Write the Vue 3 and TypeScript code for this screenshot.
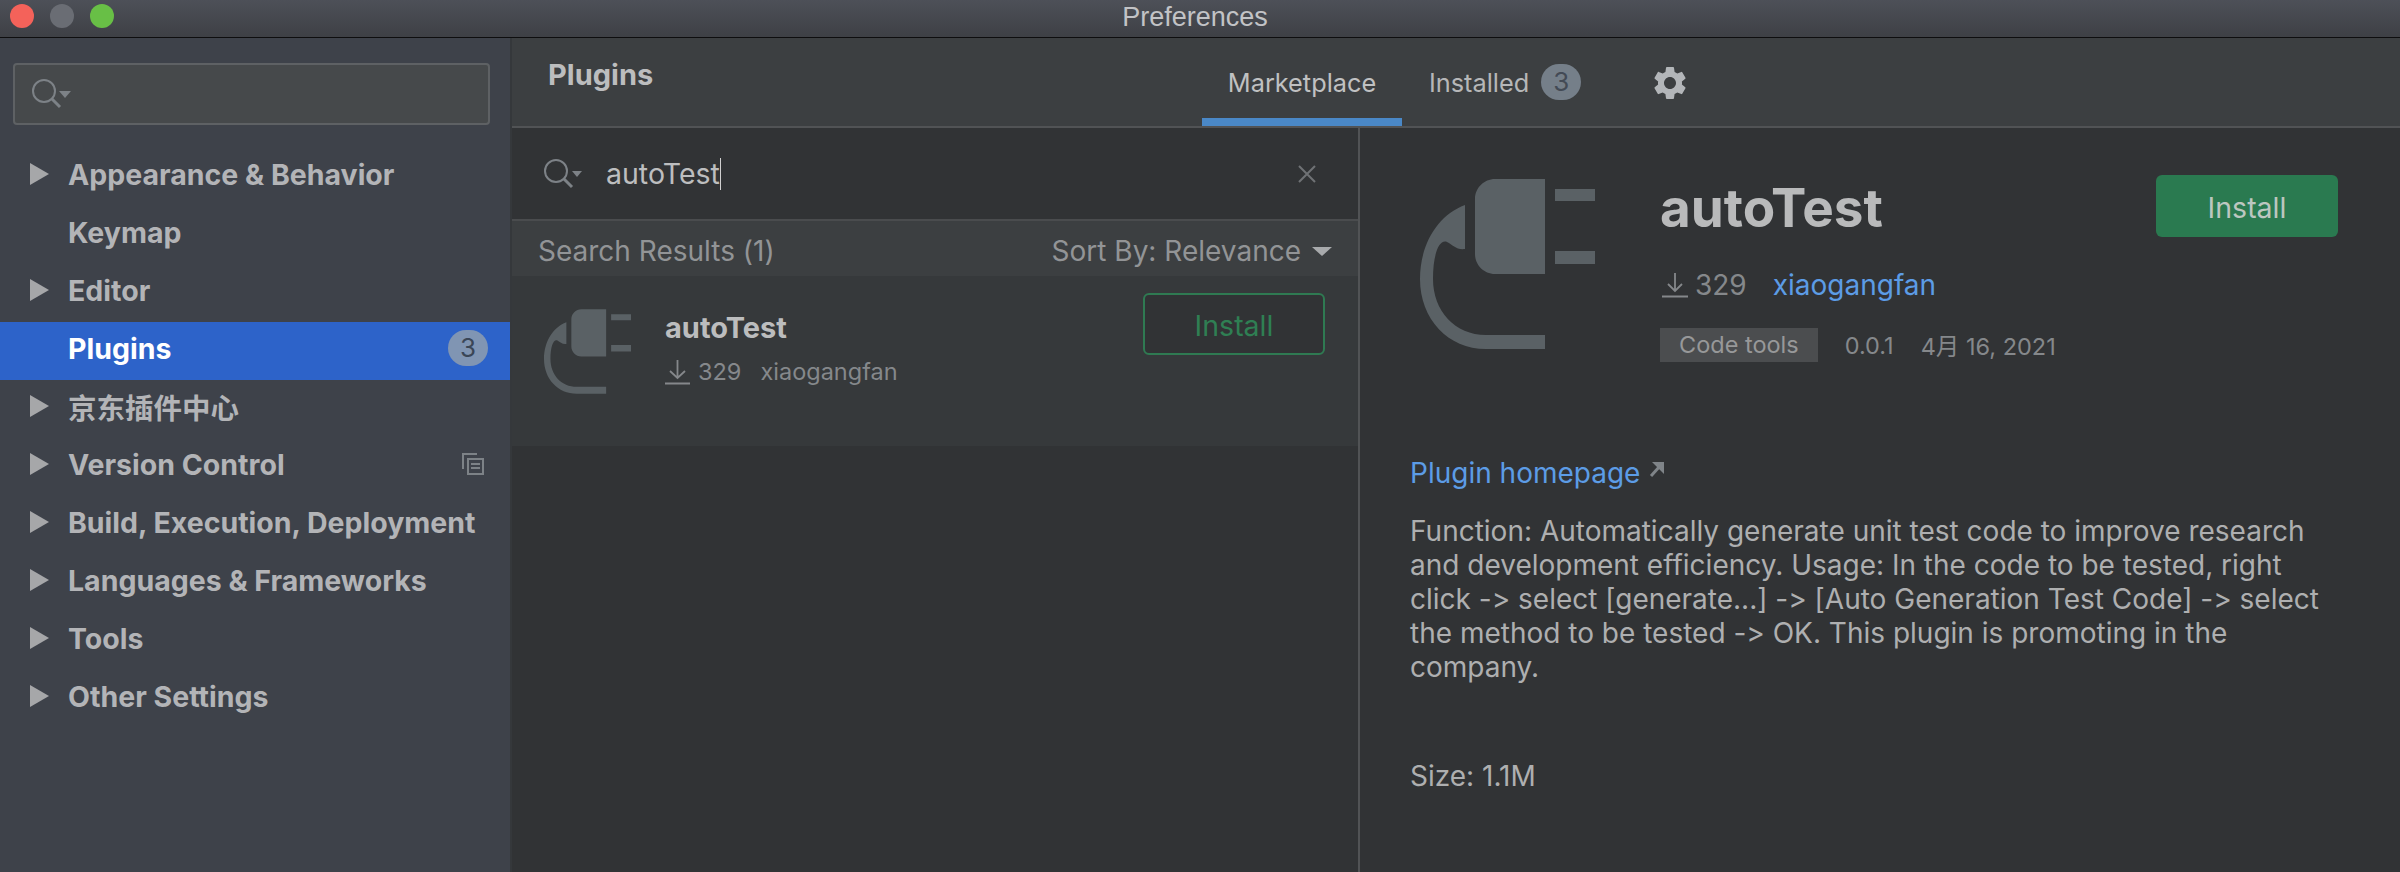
<script setup lang="ts">
type NavItem = { label: string; arrow: boolean; active?: boolean; badge?: string; scope?: boolean }

const navItems: NavItem[] = [
  { label: 'Appearance & Behavior', arrow: true },
  { label: 'Keymap', arrow: false },
  { label: 'Editor', arrow: true },
  { label: 'Plugins', arrow: false, active: true, badge: '3' },
  { label: '京东插件中心', arrow: true },
  { label: 'Version Control', arrow: true, scope: true },
  { label: 'Build, Execution, Deployment', arrow: true },
  { label: 'Languages & Frameworks', arrow: true },
  { label: 'Tools', arrow: true },
  { label: 'Other Settings', arrow: true },
]

const plugPath =
  'M75 0H125V95H75C64 95 55 86 55 75V20C55 9 64 0 75 0Z M135 10H175V22H135Z M135 72H175V85H135Z M45 26V70C36 71 33 66 27 63C19 60 13 75 13 100C13 132 35 156 66 156H125V170H66C28 170 0 140 0 100C0 65 18 36 45 26Z'
</script>

<template>
  <div class="window">
    <header class="titlebar">
      <div class="lights">
        <span class="light red"></span>
        <span class="light grey"></span>
        <span class="light green"></span>
      </div>
      <span class="title">Preferences</span>
    </header>

    <div class="body">
      <aside class="sidebar">
        <div class="side-search">
          <svg class="search-icon" width="42" height="32" viewBox="0 0 42 32">
            <circle cx="13" cy="13" r="11" fill="none" stroke="#7d8287" stroke-width="2" />
            <path d="M21 21L29 29" stroke="#7d8287" stroke-width="3" />
            <path d="M28 13H40L34 20Z" fill="#7d8287" />
          </svg>
        </div>
        <nav class="nav">
          <div v-for="item in navItems" :key="item.label" class="nav-row" :class="{ active: item.active }">
            <span class="arrow-slot"><span v-if="item.arrow" class="arrow"></span></span>
            <span class="nav-label">{{ item.label }}</span>
            <span v-if="item.badge" class="nav-badge">{{ item.badge }}</span>
            <svg v-if="item.scope" class="scope" width="22" height="22" viewBox="0 0 22 22">
              <path d="M15 1H1V16" fill="none" stroke="#7d8287" stroke-width="2" />
              <rect x="6" y="6" width="15" height="15" fill="none" stroke="#7d8287" stroke-width="2" />
              <path d="M9 11H18M9 15H18" stroke="#7d8287" stroke-width="2" />
            </svg>
          </div>
        </nav>
      </aside>

      <main class="main">
        <div class="top">
          <span class="top-title">Plugins</span>
          <div class="tabs">
            <div class="tab selected">Marketplace</div>
            <div class="tab">Installed <span class="tab-badge">3</span></div>
            <svg class="gear" width="40" height="40" viewBox="0 0 24 24">
              <path
                fill="#b3b6b9"
                d="M19.14 12.94c.04-.3.06-.61.06-.94 0-.32-.02-.64-.07-.94l2.03-1.58a.49.49 0 0 0 .12-.61l-1.92-3.32a.488.488 0 0 0-.59-.22l-2.39.96c-.5-.38-1.03-.7-1.62-.94l-.36-2.54a.484.484 0 0 0-.48-.41h-3.84c-.24 0-.43.17-.47.41l-.36 2.54c-.59.24-1.13.57-1.62.94l-2.39-.96c-.22-.08-.47 0-.59.22L2.74 8.87c-.12.21-.08.47.12.61l2.03 1.58c-.05.3-.09.63-.09.94s.02.64.07.94l-2.03 1.58a.49.49 0 0 0-.12.61l1.92 3.32c.12.22.37.29.59.22l2.39-.96c.5.38 1.03.7 1.62.94l.36 2.54c.05.24.24.41.48.41h3.84c.24 0 .44-.17.47-.41l.36-2.54c.59-.24 1.13-.56 1.62-.94l2.39.96c.22.08.47 0 .59-.22l1.92-3.32c.12-.22.07-.47-.12-.61l-2.01-1.58zM12 15.6c-1.98 0-3.6-1.62-3.6-3.6s1.62-3.6 3.6-3.6 3.6 1.62 3.6 3.6-1.62 3.6-3.6 3.6z"
              />
            </svg>
          </div>
        </div>

        <div class="panes">
          <section class="list-pane">
            <div class="search">
              <svg width="44" height="34" viewBox="0 0 44 34">
                <circle cx="14" cy="14" r="11" fill="none" stroke="#7d8287" stroke-width="2" />
                <path d="M22 22L30 30" stroke="#7d8287" stroke-width="3" />
                <path d="M30 14H40L35 20Z" fill="#7d8287" />
              </svg>
              <span class="query">autoTest</span><span class="caret"></span>
              <svg class="clear" width="20" height="20" viewBox="0 0 20 20">
                <path d="M2 2L18 18M18 2L2 18" stroke="#6f7275" stroke-width="2" />
              </svg>
            </div>
            <div class="results-head">
              <span>Search Results (1)</span>
              <span class="sort">Sort By: Relevance <i class="sort-arrow"></i></span>
            </div>
            <div class="result">
              <svg class="plug-small" width="87" height="85" viewBox="0 0 175 170">
                <path :d="plugPath" fill="#5a6165" />
              </svg>
              <div class="result-info">
                <div class="result-name">autoTest</div>
                <div class="result-meta">
                  <svg width="25" height="26" viewBox="0 0 25 26">
                    <path d="M12.500 1V19M5 12L12.500 19L20 12M0 24.500H25" fill="none" stroke="#85888b" stroke-width="1.800" />
                  </svg>
                  <span>329</span>
                  <span class="result-author">xiaogangfan</span>
                </div>
              </div>
              <button class="btn-outline">Install</button>
            </div>
          </section>

          <section class="detail">
            <div class="detail-head">
              <svg class="plug-large" width="175" height="170" viewBox="0 0 175 170">
                <path :d="plugPath" fill="#5a6165" />
              </svg>
              <div class="detail-info">
                <div class="detail-name">autoTest</div>
                <div class="detail-meta">
                  <svg width="26" height="26" viewBox="0 0 26 26">
                    <path d="M13 1V19M6 12L13 19L20 12M0 24.500H26" fill="none" stroke="#85888b" stroke-width="1.800" />
                  </svg>
                  <span class="count">329</span>
                  <span class="author">xiaogangfan</span>
                </div>
                <div class="detail-tags">
                  <span class="tag">Code tools</span>
                  <span>0.0.1</span>
                  <span>4月 16, 2021</span>
                </div>
              </div>
              <button class="btn-solid">Install</button>
            </div>

            <div class="homepage">
              <span>Plugin homepage</span>
              <svg width="15" height="15" viewBox="0 0 15 15">
                <path d="M2 14L11 4" stroke="#7f8488" stroke-width="3" />
                <path d="M3 0H15V12Z" fill="#7f8488" />
              </svg>
            </div>
            <p class="desc">
              Function: Automatically generate unit test code to improve research and development efficiency. Usage: In the code to be tested, right click -&gt; select [generate...] -&gt; [Auto Generation Test Code] -&gt; select the method to be tested -&gt; OK. This plugin is promoting in the company.
            </p>
            <p class="size">Size: 1.1M</p>
          </section>
        </div>
      </main>
    </div>
  </div>
</template>

<style>
html,
body {
  margin: 0;
  background: #313335;
}
</style>

<style scoped>
.window {
  width: 2400px;
  height: 872px;
  display: flex;
  flex-direction: column;
  overflow: hidden;
  font-family: Inter, "Liberation Sans", "Noto Sans CJK SC", sans-serif;
  font-feature-settings: "calt" 0, "liga" 0;
  color: #b4b5b6;
}

.titlebar {
  position: relative;
  flex: 0 0 38px;
  box-sizing: border-box;
  height: 38px;
  display: flex;
  align-items: center;
  justify-content: center;
  background: linear-gradient(#4d5058, #3e4045);
  border-bottom: 1px solid #0e0e0f;
}

.lights {
  position: absolute;
  left: 10px;
  top: 4px;
  display: flex;
  gap: 16px;
}

.light {
  width: 24px;
  height: 24px;
  border-radius: 50%;
}

.red { background: #f4625a; }
.grey { background: #6a6d74; }
.green { background: #68bf46; }

.title {
  font-size: 27px;
  color: #c2c3c6;
  font-family: "Liberation Sans", sans-serif;
  padding: 0 10px 3px 0;
}

.body {
  flex: 1;
  display: flex;
  min-height: 0;
}

.sidebar {
  flex: 0 0 510px;
  background: #3e424a;
  border-right: 2px solid #35383b;
}

.side-search {
  box-sizing: border-box;
  height: 62px;
  margin: 25px 20px 0 13px;
  padding: 0 16px;
  display: flex;
  align-items: center;
  background: #46494b;
  border: 2px solid #5e6164;
  border-radius: 4px;
}

.nav {
  margin-top: 23px;
}

.nav-row {
  box-sizing: border-box;
  height: 58px;
  padding-bottom: 6px;
  display: flex;
  align-items: center;
  font-size: 28.500px;
  font-weight: 700;
  color: #b3b4b7;
}

.nav-row.active {
  background: #2d63c9;
  color: #fff;
}

.arrow-slot {
  flex: 0 0 68px;
  display: flex;
  justify-content: flex-start;
  padding-left: 30px;
  box-sizing: border-box;
}

.arrow {
  width: 0;
  height: 0;
  border-left: 19px solid #a6a7a9;
  border-top: 11px solid transparent;
  border-bottom: 11px solid transparent;
}

.nav-label {
  flex: 1;
  white-space: nowrap;
}

.nav-badge {
  width: 40px;
  height: 36px;
  margin-right: 22px;
  border-radius: 18px;
  background: #8095b3;
  color: #3a4657;
  font-size: 26px;
  font-weight: 400;
  text-align: center;
  line-height: 36px;
}

.scope {
  margin-right: 26px;
}

.main {
  flex: 1;
  display: flex;
  flex-direction: column;
  min-width: 0;
}

.top {
  flex: 0 0 90px;
  box-sizing: border-box;
  height: 90px;
  position: relative;
  background: #3c3f41;
  border-bottom: 2px solid #515355;
  display: flex;
}

.top-title {
  padding: 19px 0 0 36px;
  font-size: 29px;
  font-weight: 700;
  color: #bcbdbe;
}

.tabs {
  position: absolute;
  left: 690px;
  top: 0;
  height: 88px;
  display: flex;
  align-items: stretch;
}

.tab {
  box-sizing: border-box;
  padding: 8px 26px 0 27px;
  display: flex;
  align-items: center;
  gap: 12px;
  font-size: 25.300px;
  color: #b6b7b8;
  border-bottom: 8px solid transparent;
}

.tab.selected {
  width: 200px;
  justify-content: center;
  padding: 8px 0 0;
  color: #c0c1c2;
  border-bottom-color: #4a88c7;
}

.tab-badge {
  width: 40px;
  height: 36px;
  border-radius: 18px;
  background: #757f89;
  color: #434a55;
  font-size: 26px;
  text-align: center;
  line-height: 36px;
}

.gear {
  align-self: flex-start;
  margin: 25px 0 0 43px;
}

.panes {
  flex: 1;
  display: flex;
  min-height: 0;
}

.list-pane {
  flex: 0 0 848px;
  box-sizing: border-box;
  border-right: 2px solid #515355;
  background: #313335;
}

.search {
  box-sizing: border-box;
  height: 93px;
  padding: 0 41px 0 30px;
  display: flex;
  align-items: center;
  background: #313335;
  border-bottom: 2px solid #4a4c4e;
}

.query {
  margin-left: 20px;
  font-size: 28.500px;
  color: #bdbebf;
}

.caret {
  width: 1px;
  height: 32px;
  background: #d0d0d0;
}

.clear {
  margin-left: auto;
}

.results-head {
  box-sizing: border-box;
  height: 55px;
  padding: 5px 26px 0 26px;
  display: flex;
  align-items: center;
  justify-content: space-between;
  background: #3c3f41;
  font-size: 28px;
  color: #929496;
}

.sort {
  display: flex;
  align-items: center;
  gap: 11px;
}

.sort-arrow {
  width: 0;
  height: 0;
  border-top: 9px solid #a8aaac;
  border-left: 10px solid transparent;
  border-right: 10px solid transparent;
}

.result {
  box-sizing: border-box;
  height: 170px;
  padding: 17px 33px 0 32px;
  display: flex;
  align-items: flex-start;
  background: #36393b;
}

.plug-small {
  margin-top: 16px;
}

.result-info {
  margin-left: 34px;
  flex: 1;
}

.result-name {
  margin-top: 18px;
  font-size: 29px;
  line-height: 34px;
  font-weight: 700;
  color: #bcbdbe;
}

.result-meta {
  margin-top: 12px;
  display: flex;
  align-items: center;
  gap: 8px;
  font-size: 23.500px;
  color: #85888b;
}

.result-author {
  margin-left: 11px;
}

.btn-outline {
  box-sizing: border-box;
  width: 182px;
  height: 62px;
  padding-top: 3px;
  background: #313335;
  border: 2px solid #2f7a52;
  border-radius: 6px;
  color: #2f7f53;
  font: inherit;
  font-size: 28.500px;
}

.detail {
  flex: 1;
  box-sizing: border-box;
  padding: 0 62px 0 50px;
  background: #313335;
}

.detail-head {
  height: 329px;
  display: flex;
  align-items: flex-start;
}

.plug-large {
  flex: none;
  margin: 51px 0 0 10px;
}

.detail-info {
  flex: 1;
  margin-left: 65px;
  padding-top: 52px;
}

.detail-name {
  font-size: 53px;
  font-weight: 700;
  color: #b9babb;
  line-height: 56px;
}

.detail-meta {
  margin-top: 32px;
  height: 34px;
  display: flex;
  align-items: center;
  gap: 7px;
  font-size: 28px;
  color: #85888b;
}

.detail-meta svg {
  margin-left: 2px;
}

.author {
  margin-left: 19px;
  color: #5c9ce6;
}

.detail-tags {
  margin-top: 26px;
  display: flex;
  align-items: center;
  gap: 27px;
  font-size: 23.500px;
  color: #85888b;
}

.tag {
  box-sizing: border-box;
  height: 34px;
  padding: 0 19px;
  line-height: 34px;
  background: #4b4d4f;
  color: #979899;
}

.btn-solid {
  flex: none;
  box-sizing: border-box;
  width: 182px;
  height: 62px;
  margin-top: 47px;
  padding-top: 4px;
  background: #2a7a50;
  border: 0;
  border-radius: 6px;
  color: #bcc7c0;
  font: inherit;
  font-size: 28.500px;
}

.homepage {
  display: flex;
  align-items: center;
  gap: 9px;
  height: 32px;
  font-size: 28px;
  color: #5c9ce6;
}

.homepage svg {
  margin-bottom: 8px;
}

.desc {
  margin: 25px 0 0;
  font-size: 28px;
  line-height: 34px;
  color: #aeafb0;
}

.size {
  margin: 75px 0 0;
  font-size: 28px;
  line-height: 34px;
  color: #aeafb0;
}
</style>
